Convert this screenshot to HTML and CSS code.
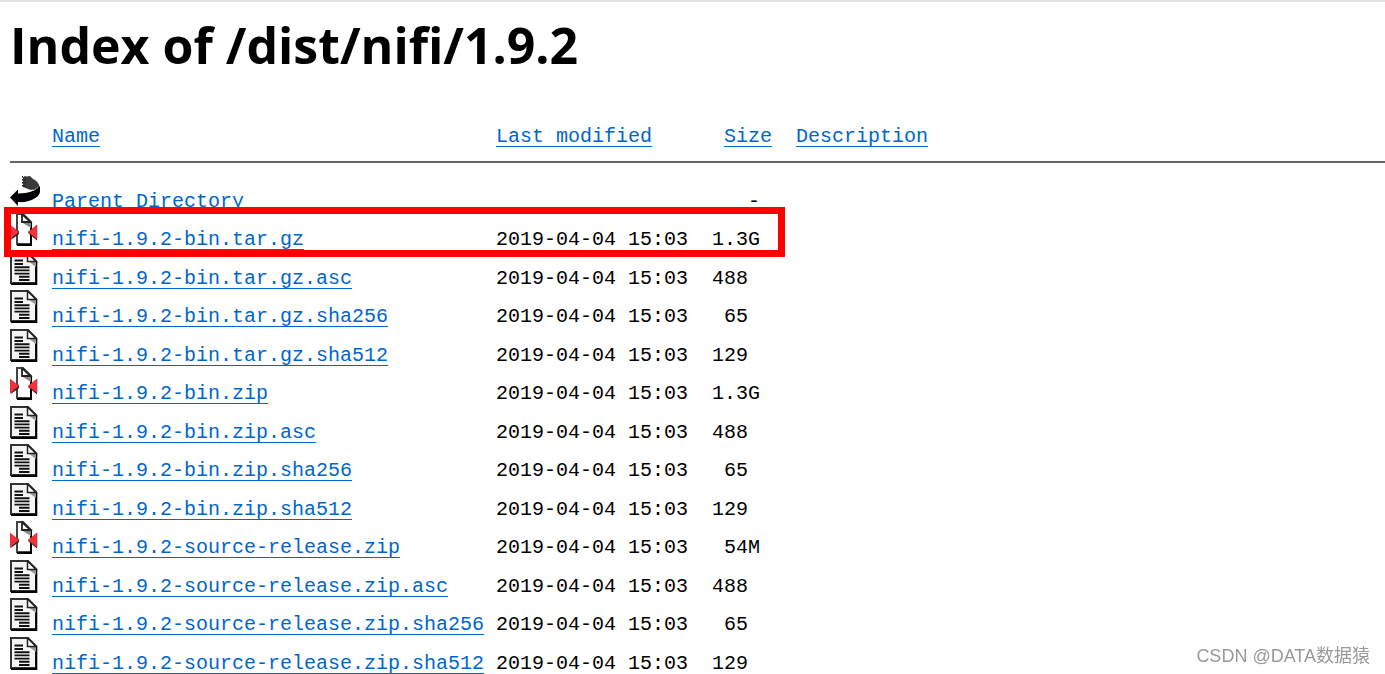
FILE: index.html
```html
<!DOCTYPE html>
<html lang="en">
<head>
<meta charset="utf-8">
<title>Index of /dist/nifi/1.9.2</title>
<link rel="stylesheet" href="styles.css">
</head>
<body>
<svg class="sprite" aria-hidden="true">
  <symbol id="icon-back" viewBox="0 0 30 33">
    <path d="M13 2L20 1L23 4C26 5 29 8 30 13L27 15L20 15L13 12Z" fill="#3a3a3a"/>
    <path d="M12.500 1V12M15 1V12" stroke="#111" stroke-dasharray="1.500 1.500"/>
    <path d="M0 22.500L8 14.500V18.500C14 18.500 20 17.500 24 15.500L30 11.500V17C29 23 19 28 8 27V31Z" fill="#000"/>
    <path d="M13 12.500L20 15L24 15L28 12.500" fill="none" stroke="#ccc" stroke-dasharray="2 1"/>
  </symbol>
  <symbol id="icon-text" viewBox="0 0 30 33">
    <path d="M1 1H18L26 9V31H1Z" fill="#f4f4f4" stroke="#333" stroke-width="2"/>
    <path d="M1 32H26.300V9" fill="none" stroke="#000" stroke-width="2"/>
    <path d="M18 9H26V15Z" fill="#999"/>
    <path d="M17.500 1V9.500H26Z" fill="#fff" stroke="#222" stroke-width="1.500"/>
    <path d="M4.500 8.500H13M4.500 12H13M4.500 15.200H19.500M4.500 18.400H19.500M4.500 21.600H19.500M9 24.800H19.500M9 28H19.500" stroke="#111" stroke-width="1.900"/>
  </symbol>
  <symbol id="icon-compressed" viewBox="0 0 30 33">
    <path d="M7 1H13L21 9V31H7Z" fill="#fff" stroke="#444" stroke-width="2"/>
    <path d="M7 32H21V9" fill="none" stroke="#000" stroke-width="2"/>
    <path d="M12 9.500H21V15Z" fill="#888"/>
    <path d="M12 1V9H20.500Z" fill="#fff" stroke="#222" stroke-width="1.800"/>
    <path d="M0 27.500L9 21V18L7 17ZM18 20L27 27.500V13Z" fill="#222"/>
    <path d="M0 12V26L9 19ZM27 12V26L18 19Z" fill="#f0343c" stroke="#c8262e" stroke-width=".6"/>
  </symbol>
</svg>

<main class="page">
  <h1 class="title">Index of /dist/nifi/1.9.2</h1>
  <table class="listing">
    <colgroup>
      <col class="col-icon"><col class="col-name"><col class="col-date"><col class="col-size"><col>
    </colgroup>
    <thead>
      <tr>
        <td></td>
        <th scope="col"><a href="#name">Name</a></th>
        <th scope="col"><a href="#modified">Last modified</a></th>
        <th scope="col" class="size"><a href="#size">Size</a></th>
        <th scope="col"><a href="#description">Description</a></th>
      </tr>
    </thead>
    <tbody>
      <tr><td class="icon"><svg><use href="#icon-back"/></svg></td><td><a href="#parent">Parent Directory</a></td><td></td><td class="size">-</td><td></td></tr>
      <tr><td class="icon marked"><svg><use href="#icon-compressed"/></svg></td><td><a href="#f1">nifi-1.9.2-bin.tar.gz</a></td><td>2019-04-04 15:03</td><td class="size">1.3G</td><td></td></tr>
      <tr><td class="icon"><svg><use href="#icon-text"/></svg></td><td><a href="#f2">nifi-1.9.2-bin.tar.gz.asc</a></td><td>2019-04-04 15:03</td><td class="size">488&nbsp;</td><td></td></tr>
      <tr><td class="icon"><svg><use href="#icon-text"/></svg></td><td><a href="#f3">nifi-1.9.2-bin.tar.gz.sha256</a></td><td>2019-04-04 15:03</td><td class="size">65&nbsp;</td><td></td></tr>
      <tr><td class="icon"><svg><use href="#icon-text"/></svg></td><td><a href="#f4">nifi-1.9.2-bin.tar.gz.sha512</a></td><td>2019-04-04 15:03</td><td class="size">129&nbsp;</td><td></td></tr>
      <tr><td class="icon"><svg><use href="#icon-compressed"/></svg></td><td><a href="#f5">nifi-1.9.2-bin.zip</a></td><td>2019-04-04 15:03</td><td class="size">1.3G</td><td></td></tr>
      <tr><td class="icon"><svg><use href="#icon-text"/></svg></td><td><a href="#f6">nifi-1.9.2-bin.zip.asc</a></td><td>2019-04-04 15:03</td><td class="size">488&nbsp;</td><td></td></tr>
      <tr><td class="icon"><svg><use href="#icon-text"/></svg></td><td><a href="#f7">nifi-1.9.2-bin.zip.sha256</a></td><td>2019-04-04 15:03</td><td class="size">65&nbsp;</td><td></td></tr>
      <tr><td class="icon"><svg><use href="#icon-text"/></svg></td><td><a href="#f8">nifi-1.9.2-bin.zip.sha512</a></td><td>2019-04-04 15:03</td><td class="size">129&nbsp;</td><td></td></tr>
      <tr><td class="icon"><svg><use href="#icon-compressed"/></svg></td><td><a href="#f9">nifi-1.9.2-source-release.zip</a></td><td>2019-04-04 15:03</td><td class="size">54M</td><td></td></tr>
      <tr><td class="icon"><svg><use href="#icon-text"/></svg></td><td><a href="#f10">nifi-1.9.2-source-release.zip.asc</a></td><td>2019-04-04 15:03</td><td class="size">488&nbsp;</td><td></td></tr>
      <tr><td class="icon"><svg><use href="#icon-text"/></svg></td><td><a href="#f11">nifi-1.9.2-source-release.zip.sha256</a></td><td>2019-04-04 15:03</td><td class="size">65&nbsp;</td><td></td></tr>
      <tr><td class="icon"><svg><use href="#icon-text"/></svg></td><td><a href="#f12">nifi-1.9.2-source-release.zip.sha512</a></td><td>2019-04-04 15:03</td><td class="size">129&nbsp;</td><td></td></tr>
    </tbody>
  </table>
</main>
<div class="watermark">CSDN @DATA数据猿</div>
</body>
</html>
```

FILE: styles.css
```css
body {
  margin: 0;
  overflow: hidden;
  background: #fff;
  color: #000;
  border-top: 2px solid #e3e3e3;
}

.sprite {
  position: absolute;
  width: 0;
  height: 0;
}

.page {
  padding-left: 10px;
}

.title {
  margin: 0;
  padding-top: 8px;
  font: bold 50px/70px "Open Sans", "Noto Sans", sans-serif;
  white-space: nowrap;
}

.listing {
  width: 100%;
  margin-top: 46px;
  table-layout: fixed;
  border-spacing: 0;
  font: 20px/22px "Liberation Mono", monospace;
  white-space: nowrap;
}

.col-icon { width: 42px; }
.col-name { width: 444px; }
.col-date { width: 216px; }
.col-size { width: 84px; }

.listing th,
.listing td {
  padding: 0;
  text-align: left;
  font-weight: normal;
  vertical-align: top;
}

.listing thead th,
.listing thead td {
  height: 35px;
  border-bottom: 2px solid #666;
}

.listing tbody::before {
  content: "";
  display: block;
  height: 12px;
}

.listing tbody td {
  height: 22px;
  padding-top: 16px;
}

.listing tbody tr:nth-child(even) td {
  padding-bottom: 1px;
}

.listing tbody td.icon {
  position: relative;
  padding-top: 0;
}

.listing .size { text-align: right; }
.listing thead .size { padding-right: 24px; }
.listing tbody .size { padding-right: 36px; }

.icon svg {
  display: block;
  width: 30px;
  height: 33px;
}

/* Red frame round the download to pick */
.marked::after {
  content: "";
  position: absolute;
  z-index: 1;
  top: -6px;
  left: -6px;
  box-sizing: border-box;
  width: 781px;
  height: 50px;
  border: 7px solid #f00;
}

a {
  color: #0066cc;
  text-decoration: underline;
  text-decoration-thickness: 1px;
  text-underline-offset: 4px;
}

.watermark {
  position: fixed;
  right: 15px;
  bottom: 6px;
  color: #999;
  font: 18px/24px "Liberation Sans", "Noto Sans CJK SC", sans-serif;
  text-shadow: 1px 1px 0 #fff;
}
```
